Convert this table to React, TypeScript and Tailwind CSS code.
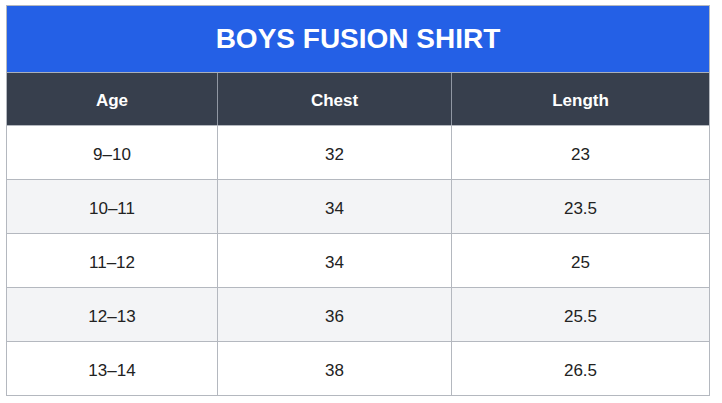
const rows = [
  { age: "9–10", chest: "32", length: "23" },
  { age: "10–11", chest: "34", length: "23.5" },
  { age: "11–12", chest: "34", length: "25" },
  { age: "12–13", chest: "36", length: "25.5" },
  { age: "13–14", chest: "38", length: "26.5" },
];

const cols = "grid grid-cols-[211px_234px_1fr]";

export default function App() {
  return (
    <div className="min-h-screen bg-white pl-[6px] pt-[5px] font-['Liberation_Sans',Arial,sans-serif]">
      <div className="w-[704px] border border-[#b4b8bf]">
        {/* Title */}
        <div className="flex h-[66px] items-center justify-center bg-[#2460e6] text-[28px] font-bold text-white">
          BOYS FUSION SHIRT
        </div>

        {/* Header */}
        <div className={`${cols} h-[53px] border-t border-[#a9b0bb] bg-[#373f4d] pt-[3px] text-[17px] font-bold text-white`}>
          <div className="-mt-[3px] flex items-center justify-center border-r border-[#9097a3] pt-[3px]">Age</div>
          <div className="-mt-[3px] flex items-center justify-center border-r border-[#9097a3] pt-[3px]">Chest</div>
          <div className="-mt-[3px] flex items-center justify-center pt-[3px]">Length</div>
        </div>

        {/* Rows */}
        {rows.map((r, i) => (
          <div
            key={i}
            className={`${cols} h-[54px] border-t border-[#b4b8bf] text-[17px] text-[#222] ${
              i % 2 === 1 ? "bg-[#f3f4f6]" : "bg-white"
            }`}
          >
            <div className="flex items-center justify-center border-r border-[#b4b8bf] pt-[4px]">{r.age}</div>
            <div className="flex items-center justify-center border-r border-[#b4b8bf] pt-[4px]">{r.chest}</div>
            <div className="flex items-center justify-center pt-[4px]">{r.length}</div>
          </div>
        ))}
      </div>
    </div>
  );
}
